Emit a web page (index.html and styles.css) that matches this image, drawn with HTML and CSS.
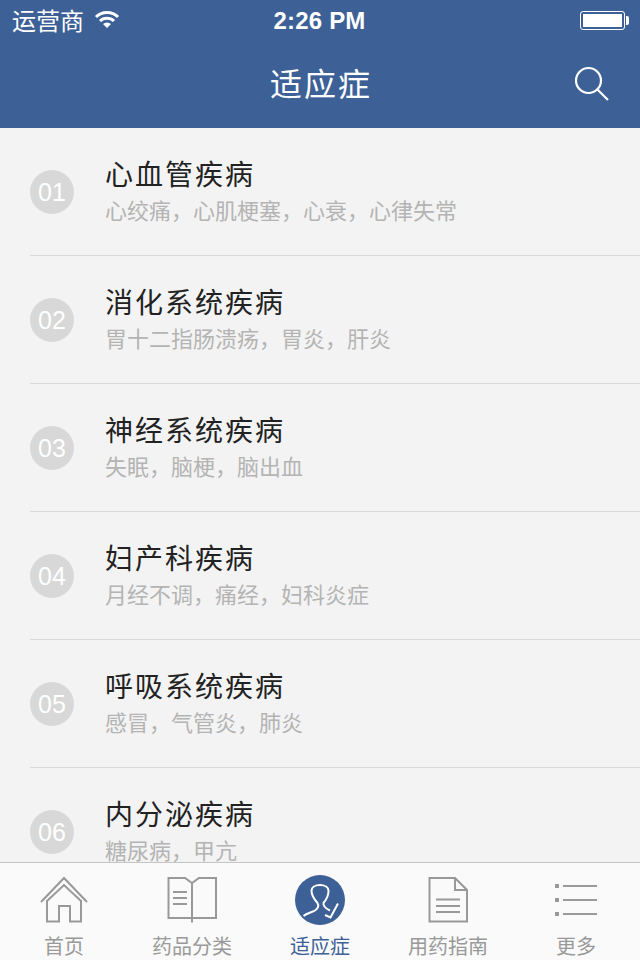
FILE: index.html
```html
<!DOCTYPE html>
<html lang="zh">
<head>
<meta charset="utf-8">
<title>适应症</title>
<link rel="stylesheet" href="styles.css">
</head>
<body>
<div class="app">
<header class="top">
  <div class="status">
    <div class="status-left">
      <span class="carrier">运营商</span>
      <svg class="wifi" width="26" height="20" viewBox="0 0 26 20">
        <path d="M2 8a15.500 15.500 0 0 1 22 0" fill="none" stroke="#fff" stroke-width="3"/>
        <path d="M6 12a10 10 0 0 1 14 0" fill="none" stroke="#fff" stroke-width="3"/>
        <path d="M9 15 L13 19 L17 15 A6 6 0 0 0 9 15 Z" fill="#fff"/>
      </svg>
    </div>
    <span class="time">2:26 PM</span>
    <div class="status-right"><div class="battery"><i></i></div></div>
  </div>
  <div class="nav">
    <h1>适应症</h1>
    <svg class="search" width="36" height="36" viewBox="0 0 36 36">
      <circle cx="14.500" cy="14.500" r="12.500" fill="none" stroke="#fff" stroke-width="2.200"/>
      <path d="M23 23 L34 34" fill="none" stroke="#fff" stroke-width="2.200"/>
    </svg>
  </div>
</header>

<ul class="list">
  <li class="row">
    <span class="num">01</span>
    <div class="info"><h2>心血管疾病</h2><p>心绞痛，心肌梗塞，心衰，心律失常</p></div>
  </li>
  <li class="row">
    <span class="num">02</span>
    <div class="info"><h2>消化系统疾病</h2><p>胃十二指肠溃疡，胃炎，肝炎</p></div>
  </li>
  <li class="row">
    <span class="num">03</span>
    <div class="info"><h2>神经系统疾病</h2><p>失眠，脑梗，脑出血</p></div>
  </li>
  <li class="row">
    <span class="num">04</span>
    <div class="info"><h2>妇产科疾病</h2><p>月经不调，痛经，妇科炎症</p></div>
  </li>
  <li class="row">
    <span class="num">05</span>
    <div class="info"><h2>呼吸系统疾病</h2><p>感冒，气管炎，肺炎</p></div>
  </li>
  <li class="row">
    <span class="num">06</span>
    <div class="info"><h2>内分泌疾病</h2><p>糖尿病，甲亢</p></div>
  </li>
</ul>

<nav class="tabs">
  <a class="tab">
    <svg width="50" height="50" viewBox="0 0 50 50" fill="none" stroke="#999" stroke-width="2">
      <path d="M2 27 L25 3 L48 27"/>
      <path d="M8 26 L25 10 L42 26"/>
      <path d="M8 25 V46.500 H20 V31 H31 V46.500 H42 V25"/>
    </svg>
    <span>首页</span>
  </a>
  <a class="tab">
    <svg width="50" height="50" viewBox="0 0 50 50" fill="none" stroke="#999" stroke-width="2">
      <path d="M1.500 3 H18 L25 8 L32 3 H49 V43 H1.500 Z"/>
      <path d="M25 8 V47.500"/>
      <path d="M6 17 H20 M6 23 H20 M6 29 H20"/>
    </svg>
    <span>药品分类</span>
  </a>
  <a class="tab active">
    <svg width="50" height="50" viewBox="0 0 50 50" fill="none">
      <circle cx="25" cy="25" r="25" fill="#3d6197"/>
      <path d="M8.500 41 C12 38 17 37.500 20 35.500 C23.500 33 24 30.500 22.500 28 C19 24 16.500 19.500 16.500 16 C16.500 12 20.500 10 25 10 C29.500 10 33.500 12 33.500 16 C33.500 20.500 31 25 28.500 28 C28 31 29.500 33 35 35.500" stroke="#fff" stroke-width="2"/>
      <path d="M30 40 L35.500 42.500 L43 28.500" stroke="#fff" stroke-width="2"/>
    </svg>
    <span>适应症</span>
  </a>
  <a class="tab">
    <svg width="50" height="50" viewBox="0 0 50 50" fill="none" stroke="#999" stroke-width="2">
      <path d="M6.500 3 H32 L44 15 V46.500 H6.500 Z"/>
      <path d="M32 3 V15 H44"/>
      <path d="M13 24.500 H37 M13 31 H37 M13 37 H37"/>
    </svg>
    <span>用药指南</span>
  </a>
  <a class="tab">
    <svg width="50" height="50" viewBox="0 0 50 50" fill="none" stroke="#999">
      <path d="M4 9 H8 V13 H4 Z M4 23 H8 V27 H4 Z M4 37 H8 V41 H4 Z" fill="#999" stroke="none"/>
      <path d="M12 11 H46 M12 25 H46 M12 39 H46" stroke-width="2"/>
    </svg>
    <span>更多</span>
  </a>
</nav>
</div>
</body>
</html>
```
FILE: styles.css
```css
html, body {
    margin: 0;
    padding: 0;
}
body {
    font-family: "Liberation Sans", "Noto Sans CJK SC", sans-serif;
    background-color: #f3f3f3;
}
h1, h2, p, ul {
    margin: 0;
    padding: 0;
}
.app {
    display: flex;
    flex-direction: column;
    height: 960px;
    overflow: hidden;
}
.top {
    flex: none;
    height: 128px;
    color: #fff;
    background-color: #3d6197;
}
.status {
    display: flex;
    align-items: center;
    height: 40px;
    padding: 0 15px 0 12px;
}
.status-left {
    flex: 1;
    display: flex;
    align-items: center;
    gap: 10px;
}
.status-right {
    flex: 1;
    display: flex;
    justify-content: flex-end;
}
.carrier {
    margin-top: -2px;
    font-size: 24px;
}
.time {
    padding: 1px 0 0 2px;
    font-size: 24px;
    font-weight: bold;
    letter-spacing: .2px;
}
.wifi {
    margin-top: -2px;
}
.battery {
    position: relative;
    box-sizing: border-box;
    width: 45px;
    height: 19px;
    padding: 2px;
    border: 1px #fff solid;
    border-radius: 3px;
}
.battery i {
    display: block;
    height: 100%;
    background-color: #fff;
}
.battery:after {
    content: '';
    position: absolute;
    top: 4px;
    right: -5px;
    width: 3px;
    height: 9px;
    background-color: #fff;
    border-radius: 0 2px 2px 0;
}
.nav {
    position: relative;
    height: 88px;
}
.nav h1 {
    padding: 2px 0 0 2px;
    font-size: 32px;
    font-weight: normal;
    letter-spacing: 2px;
    line-height: 86px;
    text-align: center;
}
.search {
    position: absolute;
    top: 26px;
    right: 30px;
}
.list {
    flex: 1;
    overflow: hidden;
    list-style: none;
}
.row {
    display: flex;
    align-items: center;
    gap: 31px;
    box-sizing: border-box;
    height: 128px;
    margin-left: 30px;
    border-bottom: 1px #d9d9d9 solid;
}
.num {
    flex: none;
    width: 44px;
    height: 44px;
    color: #fff;
    font-size: 25px;
    line-height: 45px;
    text-align: center;
    background-color: #d8d8d8;
    border-radius: 50%;
}
.info {
    padding-top: 4px;
}
.info h2 {
    margin-bottom: 1px;
    color: #222;
    font-size: 28px;
    font-weight: normal;
    letter-spacing: 2px;
    line-height: 36px;
}
.info p {
    color: #b4b4b4;
    font-size: 22px;
    line-height: 34px;
}
.tabs {
    flex: none;
    display: flex;
    box-sizing: border-box;
    height: 98px;
    background-color: #fafafa;
    border-top: 1px #c4c4c4 solid;
}
.tab {
    flex: 1;
    display: flex;
    flex-direction: column;
    align-items: center;
    padding-top: 12px;
    color: #999;
    font-size: 20px;
}
.tab svg {
    display: block;
}
.tab span {
    margin-top: 10px;
    line-height: 24px;
}
.tab.active {
    color: #3d6197;
}
```
